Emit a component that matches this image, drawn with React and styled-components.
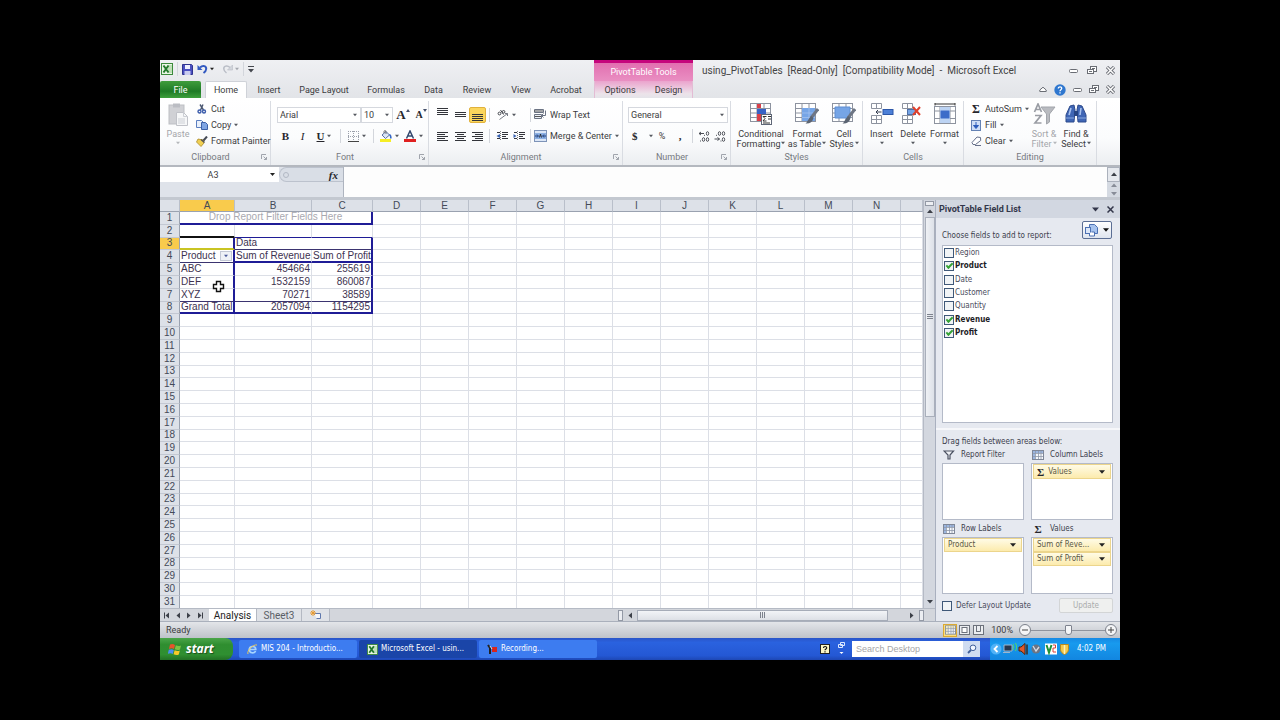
import React from 'react'
import styled, { createGlobalStyle, css } from 'styled-components'

const GlobalStyle = createGlobalStyle`
    * {
        box-sizing: border-box;
    }
    body {
        margin: 0;
        background: #000;
    }
    button, input, select {
        margin: 0;
        padding: 0;
        border: 0;
        border-radius: 0;
        background: none;
        font: inherit;
        color: inherit;
        appearance: none;
        outline: none;
    }
    svg {
        display: block;
        flex: none;
    }
`
const tahoma = "'DejaVu Sans Condensed', 'DejaVu Sans', sans-serif"

const Screen = styled.main`
    padding: 60px 12.5%;
    font-family: Roboto, 'Noto Sans', sans-serif;
    font-size: 9px;
    line-height: 10px;
    color: #3c3c40;
    white-space: nowrap;
`
const Row = styled.div`
    display: flex;
    align-items: center;
    gap: ${p => p.$gap || 0}px;
    height: ${p => (p.$h ? p.$h + 'px' : 'auto')};
`
const Divider = styled.span`
    flex: none;
    width: 1px;
    height: 14px;
    margin: 0 ${p => (p.$tight ? 0 : 3)}px;
    background: #d3d6dc;
`
const Spacer = styled.span`
    flex: 1;
`

/* title bar and tabs */
const Header = styled.header`
    display: grid;
    grid-template-columns: 434px 99px 1fr;
    grid-template-rows: 21px 17px;
    background: linear-gradient(#eff0f3, #e2e4e8);
`
const QuickAccess = styled.div`
    display: flex;
    align-items: center;
    height: 18px;
    padding-left: 1px;
    gap: 4px;
`
const QuickButton = styled.button`
    display: flex;
    align-items: center;
    gap: 2px;
    padding-right: ${p => (p.$wide ? 4 : 0)}px;
`
const ContextTitle = styled.div`
    border-top: 3px solid #c5057c;
    background: linear-gradient(#e26fb0, #e98fc2);
    color: #fff;
    text-align: center;
    line-height: 18px;
`
const TitleText = styled.h1`
    flex: 1;
    margin: 0;
    padding-left: 9px;
    font-size: 10px;
    font-weight: 400;
    white-space: pre;
    color: #444;
`
const WindowControls = styled.div`
    display: flex;
    align-items: center;
    justify-content: flex-end;
    gap: ${p => p.$gap}px;
    padding-right: 5px;
`
const Tabs = styled.nav`
    display: flex;
    align-items: stretch;
`
const Tab = styled.button`
    width: ${p => p.$w}px;
    text-align: center;
    ${p => p.$active && css`
        border: 1px solid #cfd2d8;
        border-bottom: 0;
        border-radius: 2px 2px 0 0;
        background: #fff;
    `}
`
const FileTab = styled(Tab)`
    margin-right: 4px;
    border-radius: 2px 2px 0 0;
    background: linear-gradient(#3f9d3c, #1f7a26 60%, #3da03c);
    color: #fff;
`
const ContextTabs = styled(Tabs)`
    background: linear-gradient(#eba3cd, #ece3ea 75%, #e4e4e9);
    border: solid #e3bcd4;
    border-width: 0 1px;
`

/* ribbon */
const Ribbon = styled.div`
    display: flex;
    height: 69px;
    padding-top: 3px;
    border-bottom: 2px solid #b4b8bf;
    background: linear-gradient(#fff, #fbfcfd 60%, #eceef1);
    overflow: hidden;
`
const GroupBox = styled.section`
    display: flex;
    flex: none;
    flex-direction: column;
    width: ${p => p.$w}px;
    border-right: 1px solid #d9dce2;
`
const GroupBody = styled.div`
    display: flex;
    height: 49px;
    padding-left: ${p => p.$pad}px;
`
const GroupLabel = styled.div`
    display: flex;
    align-items: center;
    height: 13px;
    padding-right: ${p => (p.$launcher ? 3 : 0)}px;
    color: #76797f;

    span {
        flex: 1;
        text-align: center;
    }
`
const Stack = styled.div`
    display: flex;
    flex-direction: column;
    width: ${p => (p.$w ? p.$w + 'px' : 'auto')};
    padding-left: ${p => p.$pad || 0}px;
`
const IconSlot = styled.span`
    display: grid;
    place-items: center;
    width: 12px;
`
const ToolButton = styled.button`
    display: flex;
    flex: none;
    align-items: center;
    justify-content: ${p => (p.$left ? 'flex-start' : 'center')};
    gap: 3px;
    width: ${p => (p.$w ? p.$w + 'px' : 'auto')};
    height: 16px;
    padding-left: ${p => (p.$left ? 4 : 0)}px;
    ${p => p.$on && css`
        border: 1px solid #e0b13c;
        border-radius: 2px;
        background: #fbd65c;
    `}
`
const BigButton = styled.button`
    display: flex;
    flex: none;
    flex-direction: column;
    align-items: center;
    justify-content: flex-start;
    width: ${p => p.$w}px;
    padding-top: 2px;
    color: ${p => (p.$dim ? '#a4a6aa' : 'inherit')};

    svg:first-child {
        margin-bottom: 3px;
    }
`
const BigLine = styled.span`
    display: flex;
    align-items: center;
    gap: 1px;
    height: 10px;
`
const SelectFrame = styled.span`
    display: flex;
    align-items: center;
    width: ${p => p.$w}px;
    height: 16px;
    padding-right: 3px;
    border: 1px solid #d5d8de;
    background: #fff;

    select {
        flex: 1;
        min-width: 0;
        padding-left: 2px;
    }
`
const Glyph = styled.span`
    font-family: 'Liberation Serif', serif;
    font-size: ${p => p.$size || 11}px;
    font-weight: ${p => (p.$plain ? 400 : 700)};
    font-style: ${p => (p.$italic ? 'italic' : 'normal')};
    text-decoration: ${p => (p.$under ? 'underline' : 'none')};
    color: #26262c;
`
const SizeMark = styled.svg`
    align-self: flex-start;
    margin: 2px 0 0 -3px;
`

/* formula bar */
const FormulaBar = styled.div`
    display: flex;
    height: 33px;
    border-bottom: 3px solid #c3c8d0;
    background: #dfe3ea;
`
const NameBox = styled.div`
    display: flex;
    align-items: center;
    width: 119px;
    height: 15px;
    padding-right: 4px;
    background: #fff;

    input {
        flex: 1;
        min-width: 0;
        padding-right: 4px;
        text-align: center;
    }
`
const FxArea = styled.div`
    display: flex;
    align-items: center;
    justify-content: space-between;
    width: 64px;
    height: 15px;
    padding: 0 5px 0 3px;
    border: 1px solid #bcc2cd;
    border-right: 0;
    border-radius: 8px 0 0 8px;
    background: #d9dee6;
`
const FormulaInput = styled.input`
    flex: 1;
    min-width: 0;
    border-left: 1px solid #aeb4bf;
    background: #fdfdfd;
    padding: 0 4px;
`
const ScrollStack = styled.div`
    display: flex;
    flex-direction: column;
    width: 13px;
    background: #d5dae2;

    button {
        display: flex;
        flex: 1;
        align-items: center;
        justify-content: center;
    }
    button:first-child {
        flex: none;
        height: 15px;
        border: 1px solid #abb1bc;
        background: #e6e9ee;
    }
`

/* worksheet */
const Workspace = styled.div`
    display: flex;
    height: 421px;
`
const SheetPane = styled.div`
    display: flex;
    flex: 1;
    flex-direction: column;
    min-width: 0;
`
const SheetRow = styled.div`
    display: flex;
    flex: 1;
    min-height: 0;
`
const GridClip = styled.div`
    position: relative;
    flex: 1;
    min-width: 0;
    overflow: hidden;
    background: #fff;
`
const Grid = styled.table`
    width: 100%;
    height: 409px;
    border-collapse: separate;
    border-spacing: 0;
    table-layout: fixed;
    font-family: 'Liberation Sans', Arial, sans-serif;
    font-size: 10px;
    line-height: 10px;
    color: #3d3250;
`
const ColHead = styled.th`
    height: 12px;
    padding: 0;
    border-right: 1px solid #b9bfca;
    border-bottom: 1px solid #9aa2b0;
    background: ${p => (p.$on ? '#f9cb4c' : '#dde1e8')};
    font-weight: 400;
    color: #444a58;
    overflow: hidden;
`
const RowHead = styled(ColHead)`
    border-right-color: #9aa2b0;
    border-bottom-color: #c3c8d2;
`
const line = {
    navy: '1px solid #1f1c96',
    thick: '2px solid #1f1c96',
    dark: '1px solid #3b3470',
    black: '2px solid #111',
    yellow: '2px solid #c9c423',
}
const Cell = styled.td`
    padding: 0 1px;
    border-right: 1px solid #dcdfe6;
    border-bottom: 1px solid #dcdfe6;
    overflow: hidden;
    text-align: ${p => p.$align || 'left'};
    ${p => p.$right && css`border-right: ${line[p.$right]};`}
    ${p => p.$bottom && css`border-bottom: ${line[p.$bottom]};`}
    ${p => p.$dim && css`color: #a9a9b0;`}
`
const FieldCell = styled.div`
    display: flex;
    justify-content: space-between;
    align-items: center;
    height: 10px;

    button {
        display: flex;
        align-items: center;
        justify-content: center;
        width: 12px;
        height: 10px;
        border: 1px solid #c3c8d6;
        background: #eef1f7;
    }
`
const MousePointer = styled.div`
    position: absolute;
    left: 52px;
    top: 80px;
`
const VScroll = styled.div`
    display: flex;
    flex: none;
    flex-direction: column;
    align-items: center;
    width: 12px;
    padding: 1px 0 3px;
    border-left: 1px solid #b5bac5;
    background: #d3d7df;
`
const VThumb = styled.div`
    display: flex;
    align-items: center;
    justify-content: center;
    width: 10px;
    height: 200px;
    margin: 2px 0 auto;
    border: 1px solid #a9afbb;
    background: linear-gradient(90deg, #eff1f5, #dde1e8);
`
const SheetBar = styled.div`
    display: flex;
    flex: none;
    align-items: center;
    height: 13px;
    padding-right: 11px;
    border-top: 1px solid #b5bac4;
    background: #d3d6dc;
`
const NavButtons = styled.div`
    display: flex;
    gap: 5px;
    padding: 0 6px 0 4px;
`
const SheetTab = styled.button`
    display: flex;
    align-items: center;
    justify-content: center;
    width: ${p => p.$w}px;
    height: 12px;
    border-right: 1px solid #b4b9c3;
    background: ${p => (p.$on ? '#fff' : '#dfe2e7')};
    font-size: 10px;
    line-height: 11px;
    color: ${p => (p.$on ? '#222' : '#5b5e66')};
`
const HScroll = styled.div`
    display: flex;
    align-items: center;
    width: 306px;
    height: 12px;
    gap: 4px;
`
const Grip = styled.span`
    flex: none;
    width: ${p => (p.$flat ? 9 : 5)}px;
    height: ${p => (p.$flat ? 5 : 11)}px;
    margin-bottom: ${p => (p.$flat ? 2 : 0)}px;
    border: 1px solid #9399a5;
    background: #eceef2;
`
const HThumb = styled.div`
    display: flex;
    align-items: center;
    justify-content: center;
    width: 251px;
    height: 11px;
    margin-right: auto;
    border: 1px solid #a6acb8;
    background: linear-gradient(#f2f4f7, #dde0e6);
`

/* field list */
const Panel = styled.aside`
    flex: none;
    width: 185px;
    border-left: 1px solid #a9b0bf;
    background: #e6e9f0;
    font-family: ${tahoma};
    font-size: 8px;
    color: #3b3d4c;
`
const PanelTitle = styled.div`
    display: flex;
    align-items: center;
    gap: 8px;
    height: 18px;
    padding: 0 6px 0 3px;
    background: #d2d7e1;
    color: #33364a;

    h2 {
        flex: 1;
        margin: 0;
        font-family: Roboto, sans-serif;
        font-size: 9px;
    }
`
const PanelBody = styled.div`
    padding: 3px 7px 0 6px;
`
const ChooseLine = styled.div`
    display: flex;
    align-items: flex-end;
    justify-content: space-between;
    height: 20px;
`
const LayoutButton = styled.button`
    display: flex;
    align-items: center;
    justify-content: center;
    gap: 5px;
    width: 30px;
    height: 18px;
    margin: 0 1px 2px 0;
    border: 1px solid #5b6e94;
    border-radius: 2px;
    background: linear-gradient(#fff, #dfe5ef);
`
const FieldBox = styled.div`
    height: 178px;
    margin-top: 4px;
    border: 1px solid #b4bac8;
    background: #fff;
`
const FieldRows = styled.ul`
    display: flex;
    flex-direction: column;
    height: 94px;
    margin: 0;
    padding: 0 0 0 1px;
    list-style: none;

    li {
        display: flex;
        flex: 1;
        align-items: center;
    }
`
const CheckLabel = styled.label`
    display: flex;
    align-items: center;
    gap: ${p => p.$gap || 1}px;
    font-weight: ${p => (p.$bold ? 700 : 400)};
    color: ${p => (p.$bold ? '#1d1d26' : '#4a4c5c')};
`
const Check = styled.input`
    display: grid;
    place-items: center;
    width: 10px;
    height: 10px;
    border: 1px solid #3f5878;
    background: #f1f4f6;

    &:checked::after {
        content: '';
        box-sizing: border-box;
        width: 7px;
        height: 4px;
        margin-top: -2px;
        border: solid #36a336;
        border-width: 0 0 2px 2px;
        transform: rotate(-45deg);
    }
`
const PanelRule = styled.hr`
    height: 2px;
    margin: 5px -7px 6px -6px;
    border: 0;
    background: #f6f7fa;
`
const Areas = styled.div`
    display: grid;
    grid-template-columns: repeat(2, minmax(0, 1fr));
    gap: 1px 7px;
`
const AreaTitle = styled.div`
    display: flex;
    align-items: center;
    gap: 6px;
    height: 16px;
    padding: 0 0 1px 1px;
`
const AreaBox = styled.div`
    height: 57px;
    padding: 0 1px;
    border: 1px solid #b4bac8;
    background: #fff;
`
const AreaItem = styled.button`
    display: flex;
    align-items: center;
    gap: 4px;
    width: 100%;
    height: ${p => (p.$tall ? 15 : 14)}px;
    padding: 0 5px 0 3px;
    border: 1px solid #ecd58c;
    background: linear-gradient(#fffbe6, #fcebad);
    color: #5a5744;
`
const UpdateButton = styled.button`
    width: 54px;
    height: 15px;
    border: 1px solid #d3d5d6;
    border-radius: 2px;
    background: #eff0ef;
    color: #a9abab;
`

/* status bar and taskbar */
const StatusBar = styled.footer`
    display: flex;
    align-items: center;
    height: 17px;
    padding: 0 3px 0 6px;
    border-top: 1px solid #aab0bc;
    background: linear-gradient(#e3e5e9, #bfc3ca);
`
const ViewButton = styled.button`
    display: grid;
    place-items: center;
    width: 14px;
    height: 13px;
    ${p => p.$on && css`
        border: 1px solid #dba932;
        background: #fbdf80;
    `}
`
const ZoomValue = styled.span`
    padding: 0 6px;
`
const Slider = styled.input`
    width: 74px;
    height: 12px;
    background: linear-gradient(#8e939d, #8e939d) center / 100% 1px no-repeat;

    &::-webkit-slider-thumb {
        appearance: none;
        width: 7px;
        height: 10px;
        border: 1px solid #7d828e;
        border-radius: 1px 1px 3px 3px;
        background: #f5f6f8;
    }
`
const Round = styled.button`
    display: grid;
    place-items: center;
    width: 12px;
    height: 12px;
    border: 1px solid #7b808b;
    border-radius: 50%;
    background: #f4f5f7;
`
const Taskbar = styled.div`
    display: flex;
    align-items: center;
    height: 22px;
    background: linear-gradient(#2a55c8, #2a62df 20%, #2458d4 80%, #1d47b4);
    font-family: ${tahoma};
    font-size: 8px;
    color: #fff;
`
const StartButton = styled.button`
    display: flex;
    align-items: center;
    gap: 4px;
    width: 73px;
    height: 22px;
    margin-right: 6px;
    padding-left: 8px;
    border-radius: 0 8px 8px 0;
    background: linear-gradient(#4ba54a, #2f8e30 30%, #2f8f31 75%, #226f25);
    font-family: 'Open Sans', sans-serif;
    font-size: 12px;
    font-style: italic;
    font-weight: 700;
    text-shadow: 1px 1px 1px #1c4d1c;
`
const Task = styled.button`
    display: flex;
    align-items: center;
    gap: 3px;
    width: 118px;
    height: 18px;
    margin-right: 2px;
    padding-left: 8px;
    border-radius: 2px;
    background: ${p => (p.$on ? '#1a45a8' : '#3d7cf0')};
`
const DeskTools = styled.div`
    display: flex;
    align-items: center;
    gap: 8px;
    padding-right: 7px;
`
const Search = styled.input`
    width: 111px;
    height: 16px;
    padding-left: 4px;
    background: #fff;
    font-family: 'Liberation Sans', sans-serif;
    font-size: 9px;

    &::placeholder {
        color: #a5a5a8;
        opacity: 1;
    }
`
const SearchButton = styled.button`
    display: grid;
    place-items: center;
    width: 17px;
    height: 16px;
    background: #cfdcf1;
`
const Tray = styled.div`
    display: flex;
    align-items: center;
    gap: 4px;
    width: 130px;
    height: 22px;
    margin-left: 10px;
    background: linear-gradient(#1689e4, #189aee 25%, #1286e0);
`

const Arrow = ({ c = '#55585f', s = 4 }) => (
    <svg width={s} height={s} viewBox="0 0 5 5">
        <path d="M0 1h5L2.5 4z" fill={c} />
    </svg>
)
const Tri = ({ dir, c = '#3c4048', bar }) => (
    <svg width="6" height="7" viewBox="0 0 6 7" fill={c}>
        {dir === 'l' && <path d="M5 .5v6L1.5 3.5z" />}
        {dir === 'r' && <path d="M1 .5v6l3.5-3z" />}
        {dir === 'u' && <path d="M0 5h6L3 1.5z" />}
        {dir === 'd' && <path d="M0 2h6L3 5.5z" />}
        {bar && <path d={dir === 'l' ? 'M0 .5h1v6H0z' : 'M5 .5h1v6H5z'} />}
    </svg>
)
const Launcher = () => (
    <svg width="6" height="6" viewBox="0 0 6 6" fill="none" stroke="#a0a4ac">
        <path d="M.5 5V.5H5M2.5 2.5l3 3M5.5 3v2.5H3" />
    </svg>
)
const ExcelIcon = ({ s = 12 }) => (
    <svg width={s} height={s} viewBox="0 0 12 12">
        <rect x=".5" y=".5" width="11" height="11" fill="#eaf5e6" stroke="#3b8a3b" />
        <rect x="7" y="2" width="4" height="8" fill="#bfe0b8" />
        <path d="M2.5 2.5l5 7M7.5 2.5l-5 7" stroke="#237a2c" strokeWidth="2" />
    </svg>
)
const SaveIcon = () => (
    <svg width="11" height="11" viewBox="0 0 11 11">
        <path d="M.5 .5h9l1 1v9H.5z" fill="#4a4fc0" stroke="#2f338f" />
        <rect x="3" y="1" width="5" height="4" fill="#eef0ff" />
        <rect x="2.5" y="7" width="6" height="4" fill="#c9ccf0" />
    </svg>
)
const UndoIcon = () => (
    <svg width="11" height="10" viewBox="0 0 11 10" fill="none">
        <path d="M3 3.5C6 .8 9.5 2 9.200 5c-.2 2-1.200 3-2.700 4" stroke="#3158c0" strokeWidth="2" />
        <path d="M.5 1v5h5z" fill="#3158c0" />
    </svg>
)
const RedoIcon = () => (
    <svg width="11" height="10" viewBox="0 0 11 10" fill="none">
        <path d="M8 3.5C5 .8 1.500 2 1.800 5c.2 2 1.200 3 2.700 4" stroke="#b9bdc6" strokeWidth="1.5" />
        <path d="M10.5 1v5h-5z" fill="#d3d6dc" stroke="#b9bdc6" strokeWidth=".6" />
    </svg>
)
const MinIcon = () => (
    <svg width="9" height="9" viewBox="0 0 9 9" fill="#fff" stroke="#6a6d74">
        <rect x=".5" y="3.5" width="8" height="3" rx="1" />
    </svg>
)
const RestoreIcon = () => (
    <svg width="10" height="9" viewBox="0 0 10 9" fill="#fff" stroke="#6a6d74">
        <rect x="3.5" y=".5" width="6" height="5" />
        <rect x=".5" y="3.5" width="6" height="4" />
        <path d="M2 5.5h3M5 2.5h3" />
    </svg>
)
const CloseIcon = () => (
    <svg width="9" height="9" viewBox="0 0 9 9" fill="none">
        <path d="M1 1l7 7M8 1L1 8" stroke="#6a6d74" strokeWidth="3.2" />
        <path d="M1.3 1.3l6.400 6.400M7.700 1.300L1.300 7.700" stroke="#fff" strokeWidth="1.4" />
    </svg>
)
const HelpIcon = () => (
    <svg width="12" height="12" viewBox="0 0 12 12">
        <circle cx="6" cy="6" r="5.7" fill="#2f77cf" />
        <path d="M4.3 4.6c0-2.400 3.600-2.200 3.400-.1C7.600 5.700 6 5.700 6 7.200M6 8.300v1.300" fill="none" stroke="#fff" strokeWidth="1.3" />
    </svg>
)
const UpIcon = () => (
    <svg width="8" height="7" viewBox="0 0 8 7" fill="#fff" stroke="#6a6d74">
        <path d="M.8 5.5V4L4 1.200 7.200 4v1.500z" />
    </svg>
)
const PasteIcon = () => (
    <svg width="21" height="23" viewBox="0 0 21 23">
        <rect x="1" y="2" width="15" height="19" fill="#d0d1d5" stroke="#bdbfc4" />
        <rect x="5" y=".5" width="7" height="4" fill="#bbbdc3" />
        <path d="M8.5 9.5h7l4 4v9h-11z" fill="#f6f7f8" stroke="#c0c2c8" />
        <path d="M15.5 9.5v4h4M10 16h7M10 18h7M10 20h7" fill="none" stroke="#cccfd5" />
    </svg>
)
const CutIcon = () => (
    <svg width="10" height="10" viewBox="0 0 10 10" fill="none" stroke="#3b5cab" strokeWidth="1.4">
        <path d="M3 .5L6.500 6M6 .5L3.500 6" stroke="#4a5670" />
        <circle cx="2.5" cy="7.5" r="1.5" />
        <circle cx="7" cy="7.5" r="1.5" />
    </svg>
)
const CopyIcon = () => (
    <svg width="12" height="10" viewBox="0 0 12 10">
        <path d="M.5 .5h5L7 2v5.500H.5z" fill="#e9f0fb" stroke="#5b7fc0" />
        <path d="M5.5 2.5h4l2 2v5h-6z" fill="#7fa5e3" stroke="#3c61a8" />
    </svg>
)
const BrushIcon = () => (
    <svg width="12" height="11" viewBox="0 0 12 11">
        <path d="M11 .5L7 5" stroke="#444a55" strokeWidth="2" />
        <path d="M2 3l5 1 1 3-3 3.500L.5 6z" fill="#f0cf52" stroke="#a98a28" strokeWidth=".8" />
        <path d="M5 3.5l3.500 3" stroke="#555" strokeWidth="1.6" />
    </svg>
)
const BordersIcon = () => (
    <svg width="11" height="11" viewBox="0 0 11 11" fill="none" stroke="#9ba0ab">
        <path d="M.5 0v10M5.500 0v10M10.500 0v10M0 .5h11M0 5.500h11" strokeDasharray="1 1" />
        <path d="M0 10.5h11" stroke="#444" />
    </svg>
)
const BucketIcon = () => (
    <svg width="12" height="12" viewBox="0 0 12 12">
        <path d="M2 5l4-3.500L9.500 5l-4 3.500z" fill="#dbe5f5" stroke="#5871a0" />
        <path d="M4 3V1.500C4 .3 6 .3 6 1.500V4" fill="none" stroke="#555" strokeWidth=".8" />
        <path d="M9.5 4.5c1.500 1.500 1.500 3 1 4" fill="none" stroke="#3566c4" strokeWidth="1.6" />
        <rect y="9" width="11" height="3" fill="#f6ee25" />
    </svg>
)
const FontColorIcon = () => (
    <svg width="12" height="12" viewBox="0 0 12 12">
        <path d="M2.5 8.500L6 1l3.500 7.500M4 6h4" fill="none" stroke="#33486e" strokeWidth="1.5" />
        <rect y="9" width="12" height="3" fill="#e02020" />
    </svg>
)
const Lines = ({ rows, h = 9 }) => (
    <svg width="11" height={h} viewBox={`0 0 11 ${h}`} shapeRendering="crispEdges" fill="#33353b">
        {rows.map(([x, w, y]) => <rect key={y} x={x} y={y} width={w} height="1" />)}
    </svg>
)
const IndentIcon = ({ flip }) => (
    <svg width="12" height="10" viewBox="0 0 12 10">
        <path d="M1 1.5h3M6 1.500h6M6 3.500h6M6 5.500h4M1 7.500h3M6 7.500h6" stroke="#33353b" />
        <path d="M4.5 0v10" stroke="#777" strokeDasharray="1 1" />
        <path d={flip ? 'M.5 3v4l3-2z' : 'M4 3v4L.5 5z'} fill="#3963b3" />
    </svg>
)
const OrientIcon = () => (
    <svg width="12" height="11" viewBox="0 0 12 11" fill="none" stroke="#44474e">
        <path d="M2.5 10.500l8-6M10.500 7V4.500H8" stroke="#777b84" />
        <circle cx="2.5" cy="4.5" r="1.4" />
        <path d="M3.5 1l3 4.500" />
        <circle cx="6.6" cy="2.8" r="1.3" />
    </svg>
)
const WrapIcon = () => (
    <svg width="13" height="11" viewBox="0 0 13 11">
        <path d="M.5 .5h9v3h-9zM.5 5.500h7v4h-7z" fill="#edf1f8" stroke="#6c7484" />
        <path d="M0 2h9M1 7.500h6" stroke="#555" />
        <path d="M11.5 1.500v5h-4M9.500 4.500l-2 2 2 2" fill="none" stroke="#6c7484" />
    </svg>
)
const MergeIcon = () => (
    <svg width="13" height="12" viewBox="0 0 13 12">
        <rect x=".5" y=".5" width="12" height="11" fill="#dce7f7" stroke="#7d93b8" />
        <rect x="1" y="3" width="11" height="6" fill="#8db1e4" />
        <path d="M1 6h3M3 4.500L4.500 6 3 7.500M12 6H9M10 4.500L8.500 6 10 7.500" stroke="#1f3f7d" fill="none" />
        <path d="M5.5 7.500l1-3.500 1 3.500" stroke="#222" fill="none" strokeWidth=".9" />
    </svg>
)
const DecimalIcon = ({ dec }) => (
    <svg width="12" height="11" viewBox="0 0 12 11" fill="none" stroke="#4b4e56">
        <ellipse cx="9.5" cy="2.5" rx="1.2" ry="1.8" />
        <ellipse cx="9.5" cy="8.5" rx="1.2" ry="1.8" />
        <ellipse cx="5.5" cy={dec ? 2.5 : 8.5} rx="1.2" ry="1.8" />
        <path d={dec ? 'M2 4.300h1M6.500 10h1M.5 8h5M3.500 6.500l2 1.500-2 1.500' : 'M6 4.300h1M2 10h1M1 2.500h5M3 1L1 2.500 3 4'} />
    </svg>
)
const GridBase = () => (
    <>
        <rect x=".5" y=".5" width="20" height="18" fill="#fff" stroke="#8d939f" />
        <path d="M7 0v19M14 0v19M0 5.500h21M0 10h21M0 14.500h21" stroke="#8d939f" />
    </>
)
const CondIcon = () => (
    <svg width="23" height="23" viewBox="0 0 23 23">
        <GridBase />
        <path d="M7 1h4v4H7zM7 11h4v7H7z" fill="#d9404a" />
        <path d="M7 6h9v5H7z" fill="#3762c6" />
        <rect x="11.5" y="11.5" width="10" height="10" fill="#fff" stroke="#5f6777" />
        <path d="M16.5 13.500H13l2 2-2 2.500h3.500M18 13.500h3M18 16h3M13 20h7" stroke="#333" fill="none" />
    </svg>
)
const Brush = () => (
    <>
        <path d="M23 6l-7 9" stroke="#6e7684" strokeWidth="3" />
        <path d="M16.5 13l2 2c-1 4-4 6-8 5.500 2-1 2.500-5 6-7.500z" fill="#5b6472" />
    </>
)
const TableIcon = () => (
    <svg width="24" height="23" viewBox="0 0 24 23">
        <GridBase />
        <path d="M7 5h13v13H7z" fill="#76a5e6" />
        <path d="M7 10h13M7 14.500h13M14 5v13" stroke="#a9c6f0" strokeWidth=".7" />
        <Brush />
    </svg>
)
const StyleIcon = () => (
    <svg width="24" height="23" viewBox="0 0 24 23">
        <GridBase />
        <path d="M3 4h15v11H3z" fill="#76a5e6" stroke="#5f8ed2" />
        <Brush />
    </svg>
)
const CellsIcon = ({ kind }) => (
    <svg width="24" height="23" viewBox="0 0 24 23">
        <path d="M1.5 .5h10v5h-10zM1.500 12.500h10v8h-10zM6.500 0v5M6.500 12v8M1 16.500h11" fill="#fff" stroke="#8d939f" />
        {kind === 'insert' ? (
            <>
                <rect x="13" y="6.5" width="10" height="5" fill="#4d80d8" stroke="#2c57a8" />
                <path d="M11.5 9H6M8 7L6 9l2 2" stroke="#333c50" fill="none" />
            </>
        ) : (
            <>
                <rect x="6.5" y="6.5" width="8" height="5" fill="#76a5e6" stroke="#4d6fa8" />
                <path d="M12 4l7 8M19 4l-7 8" stroke="#e0402c" strokeWidth="2" />
            </>
        )}
    </svg>
)
const FormatIcon = () => (
    <svg width="24" height="23" viewBox="0 0 24 23">
        <rect x="1.5" y="3.5" width="21" height="17" fill="#fff" stroke="#8d939f" />
        <path d="M7 3v18M17 3v18M1 8h22M1 15.500h22" stroke="#8d939f" />
        <rect x="7" y="4" width="10" height="16" fill="#bcd3f3" />
        <rect x="7.5" y="7.5" width="9" height="8" fill="#3c6cc9" />
        <path d="M2 1h20M2 0v2.500M22 0v2.500" stroke="#333" />
    </svg>
)
const FillIcon = () => (
    <svg width="10" height="11" viewBox="0 0 10 11">
        <rect x=".5" y=".5" width="9" height="10" fill="#cfdff6" stroke="#6482b4" />
        <path d="M5 2v5M2.500 5.500l2.500 3 2.500-3z" fill="#2d5dbb" stroke="#2d5dbb" />
    </svg>
)
const EraserIcon = () => (
    <svg width="11" height="10" viewBox="0 0 11 10">
        <path d="M1 6.500L6 1l3.500 .5 .2 3-5.200 4H2z" fill="#fff" stroke="#66708a" />
        <path d="M4 9.500h6" stroke="#66708a" />
    </svg>
)
const SortIcon = () => (
    <svg width="23" height="23" viewBox="0 0 23 23" fill="none">
        <path d="M1.5 9L5 1l3.500 8M2.500 6.500h5M2 12.500h6L2 20h6.500" stroke="#9a9da4" strokeWidth="1.7" />
        <path d="M8 4h14l-5.500 7v8l-3 2V11z" fill="#b9bbc0" stroke="#a2a5ab" />
    </svg>
)
const FindIcon = () => (
    <svg width="22" height="23" viewBox="0 0 22 23">
        <path d="M5 3l4-1 1 5-1 12H1v-7z" fill="#3f66b5" stroke="#2d4a8c" />
        <path d="M17 3l-4-1-1 5 1 12h8v-7z" fill="#3f66b5" stroke="#2d4a8c" />
        <rect x="9" y="8" width="4" height="5" fill="#274584" />
        <path d="M4 12l2-7M15 12l1-7" stroke="#a9c2ee" strokeWidth="1.6" />
        <path d="M1 15h8M13 15h8" stroke="#8aa9e0" />
    </svg>
)
const MiniGrid = ({ tint = '#9bb6e0', w = 12 }) => (
    <svg width={w} height="10" viewBox="0 0 12 10">
        <rect x=".5" y=".5" width="11" height="9" fill="#f6f8fb" stroke="#7f8798" />
        <path d="M1 1h10v2H1zM1 3h2v6H1z" fill={tint} />
        <path d="M3.5 1v8M6.500 1v8M9 1v8M1 3.500h10M1 6.500h10" stroke="#8f98aa" strokeWidth=".8" />
    </svg>
)
const FunnelIcon = () => (
    <svg width="12" height="10" viewBox="0 0 12 10">
        <path d="M1 1h9.500L7 5v4H5V5z" fill="#eef0f4" stroke="#4c5262" strokeWidth="1.2" />
    </svg>
)
const LayoutIcon = () => (
    <svg width="13" height="13" viewBox="0 0 13 13">
        <path d="M4.5 .5h5l3 3v6h-8z" fill="#a7c3ee" stroke="#4d71b3" />
        <rect x=".5" y="3.5" width="5" height="6" fill="#dce7f8" stroke="#4d71b3" />
        <path d="M4.5 9v3h5V8h-3" fill="#fff" stroke="#4d71b3" />
    </svg>
)
const PageIcon = ({ br }) => (
    <svg width="11" height="10" viewBox="0 0 11 10" fill="#eceef1" stroke="#6c717b">
        <rect x=".5" y=".5" width="10" height="9" />
        {br ? <path d="M3.5 0v6.500M7.500 0v6.500H3" fill="none" /> : <rect x="3" y="2.5" width="5" height="5" fill="#fff" />}
    </svg>
)
const WindowsLogo = () => (
    <svg width="14" height="13" viewBox="0 0 14 13">
        <path d="M2 1.500C4 .5 5.500 1 7 2L6 6C4.500 5 3 5 1 6z" fill="#e8532b" />
        <path d="M7.8 2.300c2 1 3.500 1 5.200 .2l-1 4c-2 1-3.500 .5-5.200-.3z" fill="#7cc342" />
        <path d="M.8 6.800C3 6 4.300 6 5.800 7l-1 4C3.300 10 2 10-.2 10.800z" fill="#4a8df0" />
        <path d="M6.6 7.300c2 1 3.500 1 5.200 .2l-1 4c-2 1-3.500 .5-5.200-.3z" fill="#f8c928" />
    </svg>
)
const IeIcon = () => (
    <svg width="11" height="11" viewBox="0 0 11 11" fill="none">
        <path d="M2.5 5.500h6.300C8.800 1.500 2.300 1.500 2.300 5.500c0 4 5 4.200 6.300 1.500" stroke="#a6d4ff" strokeWidth="1.7" />
        <path d="M1 10C-.5 7 6 0 10 1" stroke="#f1cc55" />
    </svg>
)
const RecordIcon = () => (
    <svg width="11" height="11" viewBox="0 0 11 11">
        <path d="M1 1l2 3v6" stroke="#222" strokeWidth="2" fill="none" />
        <rect x="5" y="3" width="5" height="5" fill="#d8251c" />
        <path d="M3 2l2 3" stroke="#ddd" />
    </svg>
)
const SearchIcon = () => (
    <svg width="10" height="10" viewBox="0 0 10 10" fill="none" stroke="#3f5f9a">
        <circle cx="6" cy="3.8" r="2.8" fill="#f2f7ff" />
        <path d="M4 6L1 9" strokeWidth="1.8" />
    </svg>
)
const HelpBox = () => (
    <svg width="10" height="10" viewBox="0 0 10 10">
        <rect x=".5" y=".5" width="9" height="9" fill="#fdf8c4" stroke="#222" />
        <path d="M3.5 4c0-2 3.300-2 3.200 0C6.600 5 5 5 5 6.300M5 7.200v1.200" stroke="#111" fill="none" strokeWidth="1.2" />
    </svg>
)
const LangIcon = () => (
    <svg width="7" height="14" viewBox="0 0 7 14" fill="none" stroke="#dce8ff">
        <path d="M2.5 .5h4v3h-4zM.5 2.500h4v3h-4z" />
        <path d="M1.5 10h4l-2 2z" fill="#fff" stroke="none" />
    </svg>
)
const TrayIcons = () => (
    <svg width="83" height="14" viewBox="0 0 83 14">
        <circle cx="6" cy="7" r="5.5" fill="#4fb2f7" />
        <path d="M7.5 4l-3 3 3 3" stroke="#fff" strokeWidth="1.8" fill="none" />
        <path d="M14 3h8v6h-8zM13 10.500h7" fill="#27374f" stroke="#9db6cf" />
        <path d="M23 2c1 2 1 4 0 6M25.500 1c1.500 3 1.500 5 0 8" stroke="#55d66c" fill="none" />
        <path d="M29 5h2l4-3.500v11L31 9h-2z" fill="#e0582c" stroke="#4a2410" />
        <path d="M37 2.500v10" stroke="#333" strokeWidth="1.6" />
        <circle cx="46" cy="7" r="4.5" fill="#6b7484" />
        <path d="M43 4l3 5 3-4" stroke="#d6dbe4" strokeWidth="1.3" fill="none" />
        <rect x="55" y="1.5" width="12" height="11" fill="#fff" />
        <path d="M56.5 3L59 10.500 61.500 3" stroke="#1f9138" strokeWidth="2" fill="none" />
        <path d="M63 3h2.500v3H63v4h3" stroke="#d8413a" fill="none" />
        <path d="M70.5 2.500h8v5c0 2.500-2 4-4 5-2-1-4-2.500-4-5z" fill="#f3c94b" stroke="#b98a1d" />
        <path d="M74.5 3v9" stroke="#fff0b5" strokeWidth="1.5" />
    </svg>
)
const CrossPointer = () => (
    <svg width="13" height="13" viewBox="0 0 13 13">
        <path d="M4.5 1.500h4v3h3v4h-3v3h-4v-3h-3v-4h3z" fill="#fff" stroke="#111" strokeWidth="1.4" />
    </svg>
)

const Group = ({ w, pad, label, launcher, children }) => (
    <GroupBox $w={w}>
        <GroupBody $pad={pad}>{children}</GroupBody>
        <GroupLabel $launcher={launcher}>
            <span>{label}</span>
            {launcher && <Launcher />}
        </GroupLabel>
    </GroupBox>
)
const Big = ({ w, icon, a, b, dim }) => (
    <BigButton $w={w} $dim={dim}>
        {icon}
        <BigLine>{a}</BigLine>
        <BigLine>
            {b}
            <Arrow c={dim ? '#b5b7bb' : undefined} />
        </BigLine>
    </BigButton>
)
const Small = ({ icon, text, drop }) => (
    <Row $h={16}>
        <ToolButton>
            <IconSlot>{icon}</IconSlot>
            {text}
            {drop && <Arrow />}
        </ToolButton>
    </Row>
)
const Combo = ({ w, value, label }) => (
    <SelectFrame $w={w}>
        <select aria-label={label} defaultValue={value}>
            <option>{value}</option>
        </select>
        <Arrow />
    </SelectFrame>
)

const tabs = [['Home', 42], ['Insert', 44], ['Page Layout', 66], ['Formulas', 58], ['Data', 37], ['Review', 50], ['View', 38], ['Acrobat', 52]]
const columns = ['A', 'B', 'C', 'D', 'E', 'F', 'G', 'H', 'I', 'J', 'K', 'L', 'M', 'N', '']
const widths = [55, 77, 61, 48, 48, 48, 48, 48, 48, 48, 48, 48, 48, 48]
const data = [
    ['ABC', 454664, 255619],
    ['DEF', 1532159, 860087],
    ['XYZ', 70271, 38589],
    ['Grand Total', 2057094, 1154295],
]
const fields = [['Region'], ['Product', true], ['Date'], ['Customer'], ['Quantity'], ['Revenue', true], ['Profit', true]]

const three = [[0, 11, 0], [0, 11, 2], [0, 11, 4]]
const four = [...three, [0, 11, 6]]
const left = [[0, 11, 0], [0, 8, 2], [0, 11, 4], [0, 8, 6], [0, 11, 8]]
const center = [[0, 11, 0], [2, 7, 2], [0, 11, 4], [2, 7, 6], [0, 11, 8]]
const right = [[0, 11, 0], [3, 8, 2], [0, 11, 4], [3, 8, 6], [0, 11, 8]]

const blanks = n => Array.from({ length: n }, (_, i) => <Cell key={'b' + i} />)

const SheetRowCells = ({ n }) => {
    if (n === 1) {
        return (
            <>
                <Cell colSpan={3} $align="center" $dim $right="thick" $bottom="thick">Drop Report Filter Fields Here</Cell>
                {blanks(12)}
            </>
        )
    }
    if (n === 2) {
        return (
            <>
                <Cell $bottom="black" />
                <Cell $bottom="navy" />
                <Cell $bottom="navy" />
                {blanks(12)}
            </>
        )
    }
    if (n === 3) {
        return (
            <>
                <Cell $bottom="yellow" $right="thick" />
                <Cell colSpan={2} $bottom="dark" $right="thick">Data</Cell>
                {blanks(12)}
            </>
        )
    }
    if (n === 4) {
        return (
            <>
                <Cell $bottom="dark" $right="thick">
                    <FieldCell>
                        Product
                        <button aria-label="Filter Product"><Arrow c="#4a5a9a" /></button>
                    </FieldCell>
                </Cell>
                <Cell $bottom="thick">Sum of Revenue</Cell>
                <Cell $bottom="thick" $right="thick">Sum of Profit</Cell>
                {blanks(12)}
            </>
        )
    }
    if (n >= 5 && n <= 8) {
        const [name, revenue, profit] = data[n - 5]
        const bottom = n === 8 ? 'thick' : n === 7 ? 'dark' : undefined
        return (
            <>
                <Cell $bottom={bottom} $right="thick">{name}</Cell>
                <Cell $align="right" $bottom={bottom}>{revenue}</Cell>
                <Cell $align="right" $bottom={bottom} $right="thick">{profit}</Cell>
                {blanks(12)}
            </>
        )
    }
    return blanks(15)
}

const RibbonGroups = () => (
    <Ribbon>
        <Group w={111} pad={6} label="Clipboard" launcher>
            <Big w={24} icon={<PasteIcon />} a="Paste" dim />
            <Stack $pad={6}>
                <Small icon={<CutIcon />} text="Cut" />
                <Small icon={<CopyIcon />} text="Copy" drop />
                <Small icon={<BrushIcon />} text="Format Painter" />
            </Stack>
        </Group>
        <Group w={158} pad={6} label="Font" launcher>
            <Stack>
                <Row $h={27}>
                    <Combo w={84} value="Arial" label="Font" />
                    <Combo w={32} value="10" label="Font size" />
                    <ToolButton $w={20}>
                        <Glyph $size={13}>A</Glyph>
                        <SizeMark width="4" height="3"><path d="M0 3h4L2 0z" fill="#44506b" /></SizeMark>
                    </ToolButton>
                    <ToolButton $w={16}>
                        <Glyph $size={10}>A</Glyph>
                        <SizeMark width="4" height="3"><path d="M0 0h4L2 3z" fill="#44506b" /></SizeMark>
                    </ToolButton>
                </Row>
                <Row $h={16}>
                    <ToolButton $w={17}><Glyph>B</Glyph></ToolButton>
                    <ToolButton $w={17}><Glyph $italic $plain>I</Glyph></ToolButton>
                    <ToolButton $w={26}><Glyph $under>U</Glyph><Arrow /></ToolButton>
                    <Divider />
                    <ToolButton $w={26}><BordersIcon /><Arrow /></ToolButton>
                    <Divider />
                    <ToolButton $w={24}><BucketIcon /><Arrow /></ToolButton>
                    <ToolButton $w={24}><FontColorIcon /><Arrow /></ToolButton>
                </Row>
            </Stack>
        </Group>
        <Group w={194} pad={4} label="Alignment" launcher>
            <Stack>
                <Row $h={27}>
                    <ToolButton $w={18}><Lines rows={four} h={13} /></ToolButton>
                    <ToolButton $w={18}><Lines rows={three} h={5} /></ToolButton>
                    <ToolButton $w={17} $on><Lines rows={four.map(([x, w, y]) => [x, w, y + 5])} h={12} /></ToolButton>
                    <Divider />
                    <ToolButton $w={34} $left><OrientIcon /><Arrow /></ToolButton>
                    <Divider />
                    <ToolButton><WrapIcon />Wrap Text</ToolButton>
                </Row>
                <Row $h={16}>
                    <ToolButton $w={18}><Lines rows={left} /></ToolButton>
                    <ToolButton $w={18}><Lines rows={center} /></ToolButton>
                    <ToolButton $w={17}><Lines rows={right} /></ToolButton>
                    <Divider />
                    <ToolButton $w={18}><IndentIcon /></ToolButton>
                    <ToolButton $w={16}><IndentIcon flip /></ToolButton>
                    <Divider />
                    <ToolButton><MergeIcon />Merge &amp; Center <Arrow /></ToolButton>
                </Row>
            </Stack>
        </Group>
        <Group w={108} pad={5} label="Number" launcher>
            <Stack>
                <Row $h={27}><Combo w={100} value="General" label="Number format" /></Row>
                <Row $h={16}>
                    <ToolButton $w={25} $left><Glyph>$</Glyph><Spacer /><Arrow /></ToolButton>
                    <ToolButton $w={18}>%</ToolButton>
                    <ToolButton $w={18}><Glyph>,</Glyph></ToolButton>
                    <Divider />
                    <ToolButton $w={16}><DecimalIcon /></ToolButton>
                    <ToolButton $w={16}><DecimalIcon dec /></ToolButton>
                </Row>
            </Stack>
        </Group>
        <Group w={132} pad={4} label="Styles">
            <Big w={52} icon={<CondIcon />} a="Conditional" b="Formatting" />
            <Big w={40} icon={<TableIcon />} a="Format" b="as Table" />
            <Big w={34} icon={<StyleIcon />} a="Cell" b="Styles" />
        </Group>
        <Group w={101} pad={3} label="Cells">
            <Big w={31} icon={<CellsIcon kind="insert" />} a="Insert" />
            <Big w={32} icon={<CellsIcon kind="delete" />} a="Delete" />
            <Big w={31} icon={<FormatIcon />} a="Format" />
        </Group>
        <Group w={133} pad={6} label="Editing">
            <Stack $w={58}>
                <Small icon={<Glyph $size={12}>Σ</Glyph>} text="AutoSum" drop />
                <Small icon={<FillIcon />} text="Fill" drop />
                <Small icon={<EraserIcon />} text="Clear" drop />
            </Stack>
            <Big w={32} icon={<SortIcon />} a="Sort &amp;" b="Filter" dim />
            <Big w={32} icon={<FindIcon />} a="Find &amp;" b="Select" />
        </Group>
    </Ribbon>
)

const Area = ({ icon, title, items }) => (
    <div>
        <AreaTitle><IconSlot>{icon}</IconSlot>{title}</AreaTitle>
        <AreaBox>
            {items.map(item => (
                <AreaItem key={item} $tall={item === 'Values'}>
                    {item === 'Values' && <Glyph>Σ</Glyph>}
                    {item}
                    <Spacer />
                    <Arrow c="#222" s={6} />
                </AreaItem>
            ))}
        </AreaBox>
    </div>
)

const FieldList = () => (
    <Panel>
        <PanelTitle>
            <h2>PivotTable Field List</h2>
            <Arrow c="#33364a" s={7} />
            <svg width="7" height="7" viewBox="0 0 7 7" stroke="#33364a" strokeWidth="1.5"><path d="M.5 .5l6 6M6.500 .5l-6 6" /></svg>
        </PanelTitle>
        <PanelBody>
            <ChooseLine>
                Choose fields to add to report:
                <LayoutButton aria-label="Layout"><LayoutIcon /><Arrow c="#111" s={6} /></LayoutButton>
            </ChooseLine>
            <FieldBox>
                <FieldRows>
                    {fields.map(([name, on]) => (
                        <li key={name}>
                            <CheckLabel $bold={on}>
                                <Check type="checkbox" defaultChecked={on} />
                                {name}
                            </CheckLabel>
                        </li>
                    ))}
                </FieldRows>
            </FieldBox>
            <PanelRule />
            <Row $h={11}>Drag fields between areas below:</Row>
            <Areas>
                <Area icon={<FunnelIcon />} title="Report Filter" items={[]} />
                <Area icon={<MiniGrid />} title="Column Labels" items={['Values']} />
                <Area icon={<MiniGrid />} title="Row Labels" items={['Product']} />
                <Area icon={<Glyph>Σ</Glyph>} title="Values" items={['Sum of Reve...', 'Sum of Profit']} />
            </Areas>
            <Row $h={23}>
                <CheckLabel $gap={4}>
                    <Check type="checkbox" />
                    Defer Layout Update
                </CheckLabel>
                <Spacer />
                <UpdateButton disabled>Update</UpdateButton>
            </Row>
        </PanelBody>
    </Panel>
)

const Worksheet = () => (
    <SheetPane>
        <SheetRow>
            <GridClip>
                <Grid>
                    <colgroup>
                        <col width="20" />
                        {widths.map((w, i) => <col key={i} width={w} />)}
                        <col />
                    </colgroup>
                    <thead>
                        <tr>
                            <ColHead />
                            {columns.map((c, i) => <ColHead key={i} $on={c === 'A'}>{c}</ColHead>)}
                        </tr>
                    </thead>
                    <tbody>
                        {Array.from({ length: 31 }, (_, i) => i + 1).map(n => (
                            <tr key={n}>
                                <RowHead $on={n === 3}>{n}</RowHead>
                                <SheetRowCells n={n} />
                            </tr>
                        ))}
                    </tbody>
                </Grid>
                <MousePointer><CrossPointer /></MousePointer>
            </GridClip>
            <VScroll>
                <Grip $flat />
                <Tri dir="u" />
                <VThumb>
                    <svg width="6" height="6" stroke="#7d828d"><path d="M0 .5h6M0 2.500h6M0 4.500h6" /></svg>
                </VThumb>
                <Tri dir="d" />
            </VScroll>
        </SheetRow>
        <SheetBar>
            <NavButtons>
                <Tri dir="l" bar />
                <Tri dir="l" />
                <Tri dir="r" />
                <Tri dir="r" bar />
            </NavButtons>
            <SheetTab $w={48} $on>Analysis</SheetTab>
            <SheetTab $w={45}>Sheet3</SheetTab>
            <SheetTab $w={28} aria-label="Insert sheet">
                <svg width="12" height="10" viewBox="0 0 12 10">
                    <path d="M4.5 3.500h6v5h-4" fill="#f4f6fa" stroke="#5f78ad" />
                    <path d="M3 0v6M0 3h6M1 1l4 4M5 1L1 5" stroke="#e89a2e" />
                </svg>
            </SheetTab>
            <Spacer />
            <HScroll>
                <Grip />
                <Tri dir="l" />
                <HThumb>
                    <svg width="6" height="6" stroke="#7d828d"><path d="M.5 0v6M2.500 0v6M4.500 0v6" /></svg>
                </HThumb>
                <Tri dir="r" />
                <Grip />
            </HScroll>
        </SheetBar>
    </SheetPane>
)

const App = () => (
    <Screen>
        <GlobalStyle />
        <Header>
            <QuickAccess>
                <ExcelIcon />
                <Divider $tight />
                <SaveIcon />
                <QuickButton $wide aria-label="Undo"><UndoIcon /><Arrow c="#222" /></QuickButton>
                <QuickButton aria-label="Redo"><RedoIcon /><Arrow c="#a4a7ae" /></QuickButton>
                <Divider $tight />
                <svg width="6" height="7" viewBox="0 0 6 7" fill="#44474e"><path d="M0 0h6v1H0zM0 3h6L3 6.500z" /></svg>
            </QuickAccess>
            <ContextTitle>PivotTable Tools</ContextTitle>
            <Row>
                <TitleText>{'using_PivotTables  [Read-Only]  [Compatibility Mode]  -  Microsoft Excel'}</TitleText>
                <WindowControls $gap={9}><MinIcon /><RestoreIcon /><CloseIcon /></WindowControls>
            </Row>
            <Tabs>
                <FileTab $w={41}>File</FileTab>
                {tabs.map(([name, w]) => <Tab key={name} $w={w} $active={name === 'Home'}>{name}</Tab>)}
            </Tabs>
            <ContextTabs>
                <Tab $w={50}>Options</Tab>
                <Tab $w={47}>Design</Tab>
            </ContextTabs>
            <WindowControls $gap={7}>
                <UpIcon />
                <HelpIcon />
                <MinIcon />
                <RestoreIcon />
                <CloseIcon />
            </WindowControls>
        </Header>
        <RibbonGroups />
        <FormulaBar>
            <NameBox>
                <input aria-label="Name box" defaultValue="A3" />
                <Arrow c="#222" s={5} />
            </NameBox>
            <FxArea>
                <svg width="6" height="6" fill="none" stroke="#b2b8c4"><circle cx="3" cy="3" r="2.5" /></svg>
                <Glyph $italic>fx</Glyph>
            </FxArea>
            <FormulaInput aria-label="Formula" />
            <ScrollStack>
                <button aria-label="Up"><Tri dir="u" /></button>
                <button aria-label="Previous line"><Tri dir="u" c="#888d98" /></button>
                <button aria-label="Next line"><Tri dir="d" c="#888d98" /></button>
            </ScrollStack>
        </FormulaBar>
        <Workspace>
            <Worksheet />
            <FieldList />
        </Workspace>
        <StatusBar>
            Ready
            <Spacer />
            <ViewButton $on aria-label="Normal"><MiniGrid w={11} tint="#f6eec0" /></ViewButton>
            <ViewButton aria-label="Page layout"><PageIcon /></ViewButton>
            <ViewButton aria-label="Page break"><PageIcon br /></ViewButton>
            <ZoomValue>100%</ZoomValue>
            <Round aria-label="Zoom out"><svg width="6" height="6" stroke="#444"><path d="M0 3h6" /></svg></Round>
            <Slider type="range" aria-label="Zoom" defaultValue="50" />
            <Round aria-label="Zoom in"><svg width="6" height="6" stroke="#444"><path d="M0 3h6M3 0v6" /></svg></Round>
        </StatusBar>
        <Taskbar>
            <StartButton><WindowsLogo />start</StartButton>
            <Task><IeIcon />MIS 204 - Introductio...</Task>
            <Task $on><ExcelIcon s={11} />Microsoft Excel - usin...</Task>
            <Task><RecordIcon />Recording...</Task>
            <Spacer />
            <DeskTools>
                <HelpBox />
                <LangIcon />
            </DeskTools>
            <Search aria-label="Search Desktop" placeholder="Search Desktop" />
            <SearchButton aria-label="Search"><SearchIcon /></SearchButton>
            <Tray><TrayIcons />4:02 PM</Tray>
        </Taskbar>
    </Screen>
)

export default App
